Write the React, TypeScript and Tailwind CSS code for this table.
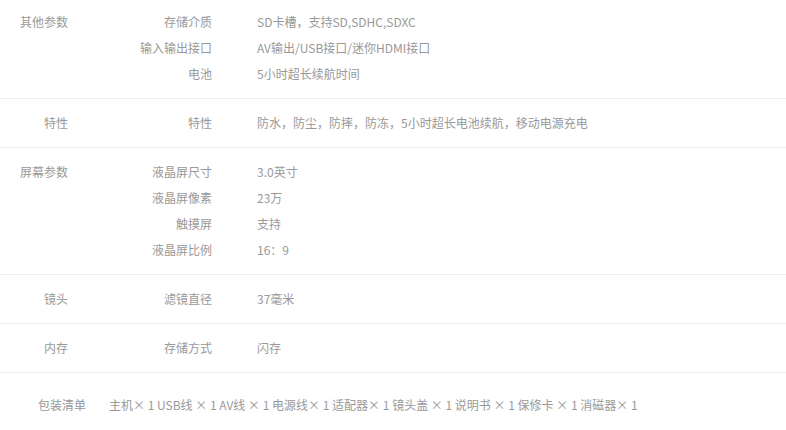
import React from 'react';

interface SpecGroup {
  title: string;
  items: { name: string; value: string }[];
}

const groups: SpecGroup[] = [
  {
    title: '其他参数',
    items: [
      { name: '存储介质', value: 'SD卡槽，支持SD,SDHC,SDXC' },
      { name: '输入输出接口', value: 'AV输出/USB接口/迷你HDMI接口' },
      { name: '电池', value: '5小时超长续航时间' },
    ],
  },
  {
    title: '特性',
    items: [{ name: '特性', value: '防水，防尘，防摔，防冻，5小时超长电池续航，移动电源充电' }],
  },
  {
    title: '屏幕参数',
    items: [
      { name: '液晶屏尺寸', value: '3.0英寸' },
      { name: '液晶屏像素', value: '23万' },
      { name: '触摸屏', value: '支持' },
      { name: '液晶屏比例', value: '16：9' },
    ],
  },
  {
    title: '镜头',
    items: [{ name: '滤镜直径', value: '37毫米' }],
  },
  {
    title: '内存',
    items: [{ name: '存储方式', value: '闪存' }],
  },
];

const packing = '主机× 1 USB线 × 1 AV线 × 1 电源线× 1 适配器× 1 镜头盖 × 1 说明书 × 1 保修卡 × 1 消磁器× 1';

export default function App() {
  return (
    <div
      className="w-[786px] h-[430px] overflow-hidden bg-white text-[12px] text-[#999]"
      style={{ fontFamily: '"Noto Sans CJK SC", "Noto Sans", sans-serif' }}
    >
      {groups.map((group, gi) => (
        <div
          key={group.title}
          className={`flex border-b border-[#eeeeee] pb-[11px] ${gi === 0 ? 'pt-[9px]' : 'pt-[11px]'}`}
        >
          <div className="w-[68px] shrink-0 text-right leading-[26px]">{group.title}</div>
          <div className="flex flex-col">
            {group.items.map((item) => (
              <div key={item.name} className="flex h-[26px] items-center">
                <div className="w-[144px] shrink-0 text-right">{item.name}</div>
                <div className="pl-[45px] whitespace-nowrap">{item.value}</div>
              </div>
            ))}
          </div>
        </div>
      ))}

      {/* 包装清单 */}
      <div className="flex pt-[19px] leading-[26px]">
        <div className="w-[86px] shrink-0 text-right">包装清单</div>
        <div className="pl-[23px] whitespace-nowrap">{packing}</div>
      </div>
    </div>
  );
}
